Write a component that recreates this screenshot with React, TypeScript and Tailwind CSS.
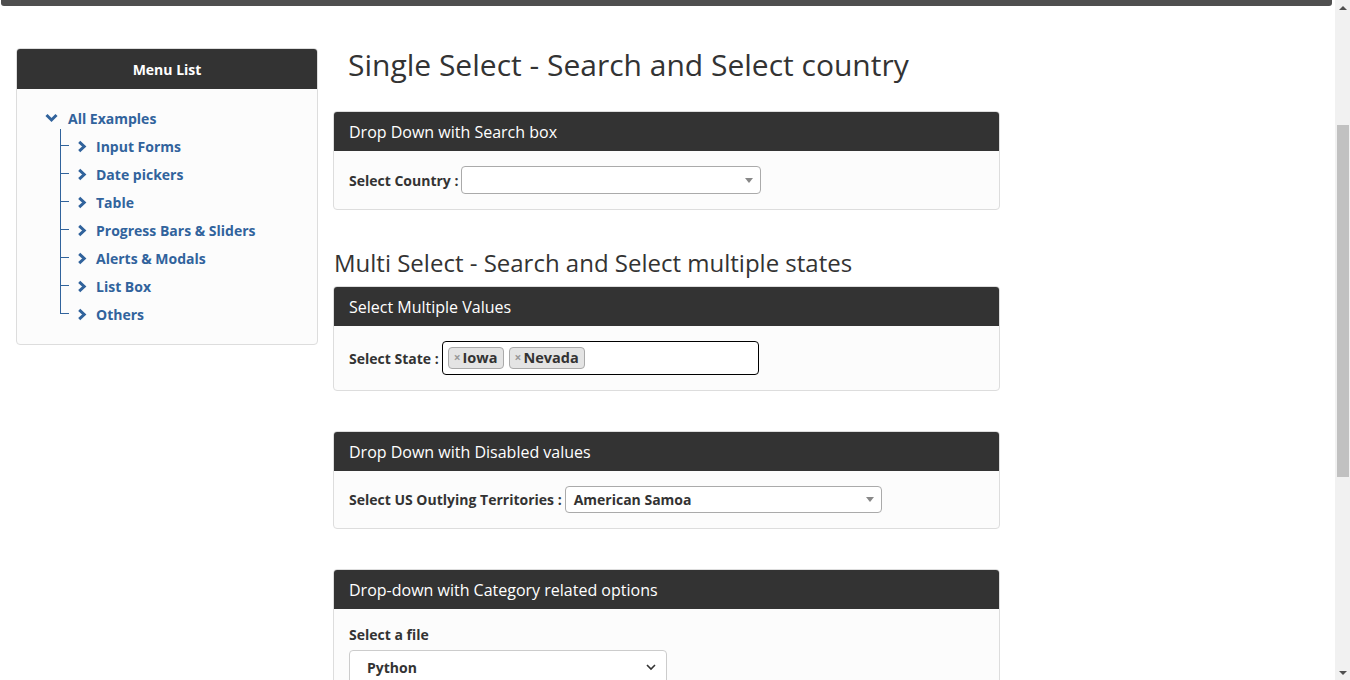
import React from "react";

// Demo page: select2 style dropdown examples with a side menu.

const menuItems = [
  "Input Forms",
  "Date pickers",
  "Table",
  "Progress Bars & Sliders",
  "Alerts & Modals",
  "List Box",
  "Others",
];

function ChevronRight() {
  return (
    <svg width="10" height="13" viewBox="0 0 10 13" aria-hidden className="shrink-0">
      <path d="M2.2 1.8 L7.2 6.5 L2.2 11.2" fill="none" stroke="#31639c" strokeWidth="3" />
    </svg>
  );
}

function ChevronDown() {
  return (
    <svg width="13" height="10" viewBox="0 0 13 10" aria-hidden className="shrink-0">
      <path d="M1.5 2 L6.5 7 L11.5 2" fill="none" stroke="#31639c" strokeWidth="3" />
    </svg>
  );
}

function Caret() {
  return <span className="h-0 w-0 border-x-[4px] border-t-[5px] border-x-transparent border-t-[#888]" />;
}

function Panel({ title, children }: { title: string; children: React.ReactNode }) {
  return (
    <section className="overflow-hidden rounded-[4px] border border-[#ddd] bg-[#fcfcfc]">
      <div className="flex h-[39px] items-center bg-[#333] px-[15px] text-[16px] text-white">{title}</div>
      <div className="px-[15px] py-[15px]">{children}</div>
    </section>
  );
}

function Sidebar() {
  return (
    <aside className="w-[302px] shrink-0 self-start overflow-hidden rounded-[4px] border border-[#ddd] bg-[#fcfcfc]">
      <div className="flex h-[40px] items-center justify-center bg-[#333] text-[14px] font-bold text-white">
        Menu List
      </div>
      <div className="pb-[16px] pl-[28px] pt-[18px]">
        <div className="flex h-[22px] items-center gap-[10px]">
          <ChevronDown />
          <span className="text-[14px] font-bold text-[#31639c]">All Examples</span>
        </div>
        <ul className="relative ml-[15px] mt-[3px]">
          {menuItems.map((item, i) => (
            <li key={item} className="relative flex h-[28px] items-center pl-[17px]">
              {/* tree guide: vertical line + tick */}
              <span
                className={
                  i === menuItems.length - 1
                    ? "absolute left-0 top-[-3px] h-[17px] w-px bg-[#31639c]"
                    : "absolute left-0 top-[-3px] h-[31px] w-px bg-[#31639c]"
                }
              />
              <span className="absolute left-0 top-[13px] h-px w-[9px] bg-[#31639c]" />
              <ChevronRight />
              <span className="ml-[9px] text-[14px] font-bold text-[#31639c]">{item}</span>
            </li>
          ))}
        </ul>
      </div>
    </aside>
  );
}

function Scrollbar() {
  return (
    <div className="flex w-[15px] shrink-0 flex-col items-center bg-[#f1f1f1]">
      <div className="flex h-[15px] items-center justify-center">
        <span className="h-0 w-0 border-x-[4px] border-b-[4px] border-x-transparent border-b-[#505050]" />
      </div>
      <div className="mt-[110px] h-[352px] w-[12px] bg-[#c1c1c1]" />
      <div className="flex-1" />
      <div className="flex h-[15px] items-center justify-center">
        <span className="h-0 w-0 border-x-[4px] border-t-[4px] border-x-transparent border-t-[#505050]" />
      </div>
    </div>
  );
}

export default function App() {
  return (
    <div
      className="flex h-[680px] w-[1350px] overflow-hidden bg-white text-[#333]"
      style={{ fontFamily: '"Open Sans", "Noto Sans", sans-serif' }}
    >
      <div className="flex min-w-0 flex-1 flex-col">
        <div className="ml-[1px] mr-[3px] h-[6px] shrink-0 rounded-b-[3px] bg-[#4f4f4f]" />
        <div className="flex items-start gap-[15px] pl-[16px] pt-[42px]">
          <Sidebar />
          <main className="w-[667px] shrink-0">
            <h1 className="ml-[15px] mt-[-3px] text-[30px] leading-[40px]">
              Single Select - Search and Select country
            </h1>
            <div className="mt-[26px]">
              <Panel title="Drop Down with Search box">
                <div className="flex items-center gap-[3px]">
                  <span className="text-[14px] font-bold">Select Country :</span>
                  <div className="flex h-[28px] w-[300px] items-center justify-end rounded-[4px] border border-[#aaa] bg-white pr-[7px]">
                    <Caret />
                  </div>
                </div>
              </Panel>
            </div>

            <h2 className="mt-[38px] pl-[1px] text-[24px] leading-[30px]">
              Multi Select - Search and Select multiple states
            </h2>
            <div className="mt-[8px]">
              <Panel title="Select Multiple Values">
                <div className="flex items-center gap-[3px]">
                  <span className="text-[14px] font-bold">Select State :</span>
                  <div className="flex h-[34px] w-[317px] items-center gap-[5px] rounded-[4px] border border-black bg-white px-[5px]">
                    {["Iowa", "Nevada"].map((s) => (
                      <span
                        key={s}
                        className="flex h-[22px] items-center rounded-[4px] border border-[#aaa] bg-[#e4e4e4] px-[5px] text-[14.5px] font-bold"
                      >
                        <span className="mr-[2px] text-[12px] font-bold text-[#999]">×</span>
                        {s}
                      </span>
                    ))}
                  </div>
                </div>
              </Panel>
            </div>

            <div className="mt-[40px]">
              <Panel title="Drop Down with Disabled values">
                <div className="flex items-center gap-[3px]">
                  <span className="text-[14px] font-bold">Select US Outlying Territories :</span>
                  <div className="flex h-[27px] w-[317px] items-center justify-between rounded-[4px] border border-[#aaa] bg-white pl-[8px] pr-[7px]">
                    <span className="text-[14px] font-bold">American Samoa</span>
                    <Caret />
                  </div>
                </div>
              </Panel>
            </div>

            <div className="mt-[40px]">
              <Panel title="Drop-down with Category related options">
                <div className="text-[14px] font-bold">Select a file</div>
                <div className="mt-[5px] flex h-[34px] w-[318px] items-center justify-between rounded-[4px] border border-[#ccc] bg-white pl-[17px] pr-[10px]">
                  <span className="text-[14px] font-bold">Python</span>
                  <svg width="10" height="8" viewBox="0 0 10 8" aria-hidden>
                    <path d="M1 2 L5 6 L9 2" fill="none" stroke="#333" strokeWidth="1.6" />
                  </svg>
                </div>
              </Panel>
            </div>
          </main>
        </div>
      </div>
      <Scrollbar />
    </div>
  );
}
